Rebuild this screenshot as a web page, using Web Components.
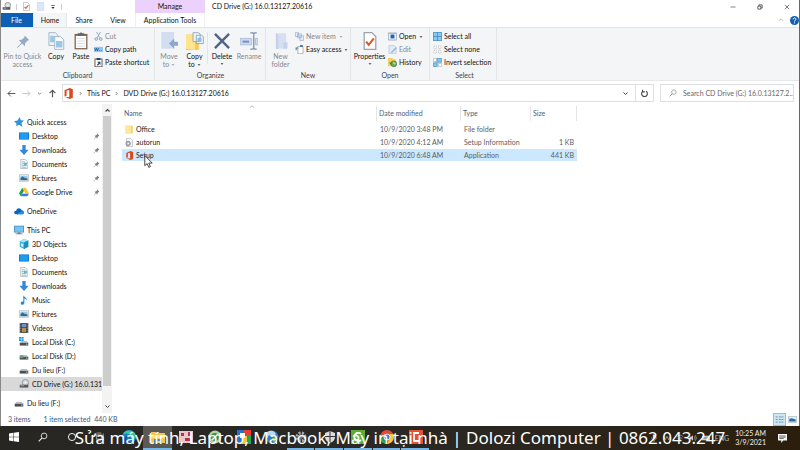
<!DOCTYPE html>
<html lang="en">
<head>
<meta charset="utf-8">
<title>CD Drive (G:) 16.0.13127.20616</title>
<style>
body{margin:0;font:7px/9px Lato,"Open Sans",sans-serif;color:#111;background:#fff}
</style>
</head>
<body>
<explorer-app></explorer-app>
<script>
const office='<path fill="#d9481c" d="M2 3l6.500-3 4 1.500v11L8.500 14 2 11.200l6 .6V2.600L4.500 3.600v6.200L2 10.800z"/>';
const mono='<path fill="#4a4f55" d="M1 8h12v4H1z"/><path fill="#a5aab0" d="M3 6h8l2 2H1z"/><path fill="#e8f5ea" d="M10 9.500h2v1h-2z"/>';
const page='<path fill="#fff" stroke="#9aa4ad" d="M2.500.5h6l3 3v10h-9z"/>';
const desk='<path fill="#0a74d1" d="M0 2h14v10H0z"/><path fill="#1c9bf0" d="M1 3h12v8H1z"/>';
const pin='<path d="M8.500 1l4.500 4.500-1.500.3-2.500 2.500-.3 3L6 8.700 1.500 13 1 12.500 5.300 8 2.700 5.300l3-.3L8.200 2.500z"/>';
const ICONS={
 office, drive:mono,
 cd:'<circle cx="9" cy="5" r="4.500" fill="#d4d7da" stroke="#888"/><circle cx="9" cy="5" r="1.300" fill="#fff"/><path fill="#555b60" d="M1 8h12v4H1z"/><path fill="#bbb" d="M2 9h5v1H2z"/>',
 check:page+'<path fill="none" stroke="#dd5b2b" stroke-width="1.700" d="M4 7.500l2 2.500 4-5"/>',
 blank:'<path fill="#dce6f6" stroke="#c6d5ec" d="M2 .5h10v13H2z"/>',
 caret:'<path fill="#333" d="M2 4h10L7 10z"/>', qat:'<path fill="#333" d="M3 7h8l-4 4.500zM3 3h8v1.500H3z"/>',
 min:'<path stroke="#444" stroke-width="1.500" d="M1 7h12"/>',
 restore:'<path fill="none" stroke="#333" stroke-width="1.700" d="M2 5h7v7H2zM4.500 5V2h7.500v7.500H9"/>',
 close:'<path stroke="#333" stroke-width="1.500" d="M2 2l10 10M12 2L2 12"/>',
 up:'<path fill="none" stroke="#999" stroke-width="1.600" d="M2 9l5-5 5 5"/>',
 updark:'<path fill="none" stroke="#444" stroke-width="2.200" d="M3 9l4-4 4 4"/>',
 down:'<path fill="none" stroke="#444" stroke-width="2" d="M3 5l4 4 4-4"/>',
 help:'<circle cx="7" cy="7" r="7" fill="#1460ac"/><path fill="none" stroke="#fff" stroke-width="1.500" d="M4.800 5.200C5 2 9.500 2.500 9.200 5.200 9 6.500 7 6.800 7 8.800M7 10v1.600"/>',
 pinbig:'<g fill="#94a9c8" transform="translate(1.500 2) scale(.8)">'+pin+'</g>', pin:'<g fill="#7c848c">'+pin+'</g>',
 copy:'<path fill="#eef3f8" stroke="#93a7ba" stroke-width=".6" d="M1.500.500h5l2 2v8h-7z"/><path fill="#f7fbff" stroke="#93a7ba" stroke-width=".6" d="M6 3.500h4.500l2.500 2.500v7.500H6z"/><path fill="#9cc7e2" d="M2.500 3H6v5H2.500zM7 7h5v5H7z"/>',
 paste:'<path fill="#80664b" d="M2 1.500h10v12H2z"/><path fill="#fff" d="M3 3h8v9.500H3z"/><path fill="#5c6872" d="M4.500 1h1.700L7 0l.8 1h1.700v2h-5z"/><path stroke="#c1ccd4" stroke-width=".5" d="M4 5h6M4 7h6M4 9h6M4 11h6"/>',
 cut:'<path fill="none" stroke="#8ea5bf" stroke-width="1.400" d="M4 0l5 9M10 0L5 9"/><circle cx="3.500" cy="11" r="2" fill="none" stroke="#8298b8" stroke-width="1.400"/><circle cx="10.500" cy="11" r="2" fill="none" stroke="#8298b8" stroke-width="1.400"/>',
 path:'<path fill="#8fc6ee" d="M0 3h14v8H0z"/><path fill="none" stroke="#23598b" stroke-width="1.300" d="M1 5l1.500 4L4 5l1.500 4L7 5M8.500 8.500h1M11 8.500h1"/>',
 shortcut:'<path fill="#fff" stroke="#77644f" stroke-width="1.600" d="M1.500 1.500h11v12h-11z"/><path fill="#25466c" d="M4 0h6v3H4zM5 6h5v5L8.500 9.500 6 12 4.500 10.500 7 8z"/>',
 move:'<path fill="#d3ddf0" d="M1 0h10v13H1z"/><path fill="#8fa5cb" d="M7 9l4-4v2.500h3v3.200h-3V13z"/>',
 copyto:'<path fill="#f5cb57" d="M0 2h10v12H0z"/><path fill="#ffe48c" d="M0 2l7 1v11l-7-1z"/><path fill="#eef5fa" stroke="#7f99ad" stroke-width=".6" d="M5.500.5h4l1.500 1v6H5.500zM8 2.500h4l1.500 1V9H8z"/><path fill="#91bddb" d="M9 4.500h3v3H9z"/>',
 del:'<path stroke="#50658a" stroke-width="1.900" d="M1.500 1.500l11 11M12.500 1.500l-11 11"/>',
 rename:'<path fill="#ccd9ee" stroke="#a2b7d6" stroke-width=".6" d="M0 5h9v5H0zM12 5h2v5h-2z"/><path fill="#7893bd" d="M2 6.700h5v1.600H2z"/><path fill="none" stroke="#7c8fae" d="M8 .7h2l.7.6.7-.6H13M8 13.300h2l.7-.6.7.6H13M10.700 1v12"/>',
 newfolder:'<path fill="#d7e0f2" d="M3 1h8v12H3z"/><path fill="#c5d2eb" d="M3 1l2 1.500v11L3 13zM9 8h3v5H9z"/>',
 newitem:'<path fill="#e9eff8" stroke="#8ca3c8" d="M.5 1h5v6h-5zM4 3h6v6H4zM7.500 6h6v7h-6z"/>',
 easy:'<path fill="#fff" stroke="#87929b" d="M4.500 2.500h8v11h-8z"/><path fill="#43739e" d="M1 4h4v1.500H2.500V8H1zM8 0h4v3H8z"/>',
 open:'<path fill="#e5f2fa" stroke="#84919c" d="M.5 1.500h13v11H.5z"/><path fill="#2166b5" d="M4 4h6v6H4z"/><path fill="#aab" d="M1 2h12v1H1z"/>',
 edit:'<path fill="#e4ebf8" stroke="#adbfdd" d="M1.500.5h8l3 3v10h-11z"/><path stroke="#a5b8db" stroke-width="2.500" d="M5 12l8-8"/>',
 history:'<path fill="#f4cf5d" d="M0 0h7l1 2h4v11H0z"/><circle cx="9" cy="9" r="4.500" fill="#72a94a" stroke="#347434"/><path fill="none" stroke="#fff" d="M9 6v3h3"/><path fill="#367b36" d="M2 7l4 0-2 4z"/>',
 all:'<path fill="#8cc7ed" d="M0 0h14v14H0z"/><path fill="none" stroke="#3d8cc0" stroke-width="1.200" d="M.5.500h13v13H.5zM7 0v14M0 7h14"/>',
 none:'<path fill="#fff" stroke="#a6a9ad" stroke-width=".9" stroke-dasharray="2 1" d="M1.500 1.500h4v4h-4zM8.500 1.500h4v4h-4zM1.500 8.500h4v4h-4zM8.500 8.500h4v4h-4z"/>',
 invert:'<path fill="#fff" stroke="#9aabb8" d="M.5.500h5v5h-5zM8.500 8.500h5v5h-5z"/><path fill="#86c4eb" stroke="#3c8bbf" d="M6.500.5h7v6h-7zM.5 7.500h6v6h-6z"/>',
 back:'<path fill="none" stroke="#555" stroke-width="1.500" d="M13 7H1.500M6 2.500L1.500 7 6 11.500"/>',
 fwd:'<path fill="none" stroke="#c6c6c6" stroke-width="1.500" d="M1 7h11.500M8 2.500L12.500 7 8 11.500"/>',
 upnav:'<path fill="none" stroke="#555" stroke-width="1.800" d="M7 13V2M2.500 6.500L7 2l4.500 4.500"/>',
 right:'<path fill="none" stroke="#444" stroke-width="2" d="M5 3l4 4-4 4"/>',
 refresh:'<path fill="none" stroke="#444" stroke-width="1.700" d="M9.500 3.500a4.500 4.500 0 1 1-5 0M4 1v3.500h3.500"/>',
 search:'<circle cx="8.500" cy="5.500" r="4" fill="none" stroke="currentColor" stroke-width="1.200"/><path stroke="currentColor" stroke-width="1.500" d="M5.500 8.500L1 13"/>',
 star:'<path fill="#2b93df" d="M8 0l1.500 4.500L14 5l-3.500 3.500 1 5L7 11l-4 2 .5-4L0 6l5-1z"/>',
 desktop:desk,
 downloads:'<path fill="#3188d8" d="M4.700 0h4.600v6.500H13.500L7 14 .5 6.500h4.200z"/>',
 documents:page+'<path stroke="#4fa5bd" d="M4 4h4M4 6.500h6M4 9h6M4 11.500h6"/><path fill="#68b8c8" d="M7 5h4v4H7z"/>',
 pictures:'<path fill="#f7fbfd" stroke="#aaa" d="M.5 2.500h13v9H.5z"/><path fill="#91cdea" d="M2 4h10v3H2z"/><path fill="#31698b" d="M2 7l3-2 3 2 4 .5V10H2z"/>',
 gdrive:'<path fill="#269a55" d="M4.500 1L0 9l2.500 4L7 5z"/><path fill="#f6c52c" d="M5 1h4.500L14 9H9z"/><path fill="#3b78d8" d="M4.500 9.500H14L11.500 13h-9z"/>',
 onedrive:'<path fill="#0b64bd" d="M3.500 11.500C-1 11.500-.5 6.500 3 6.500 4 2 9.500 2 10.500 6c4-.5 4.500 5.500 1 5.500z"/><path fill="#2092e8" d="M4 11.500l6.500-4c4-1 4.500 4 1 4z"/>',
 pc:'<path fill="#458bb8" d="M0 1h14v9.500H0z"/><path fill="#73c5f3" d="M1 2h12v7.500H1z"/><path fill="#6b7882" d="M5 10.500h4V12h3v1H2v-1h3z"/>',
 cube:'<path fill="#36b5dd" d="M1 3l6-3 6 2v9l-6 3-6-3z"/><path fill="#a8e6f5" d="M1 3l6 2 6-3-6-2z"/><path fill="#198fbf" d="M7 5l6-3v9l-6 3z"/><path fill="#e0f8fc" d="M3 6l3 1v4L3 10z"/>',
 music:'<path fill="#2089dc" d="M6 0c.5 3 5.500 3 5 8-1-2-2-3-3.500-3v6C7.500 15 2 14 2.500 11 3 9 5 9 6 9.500z"/>',
 videos:'<path fill="#3d3e43" d="M1 0h12v14H1z"/><path fill="#6a96c7" d="M4 1h6v5H4z"/><path fill="#b98d4c" d="M4 7h6v6H4z"/><path stroke="#ddd" stroke-dasharray="1 1.500" d="M2.500 0v14M11.500 0v14"/>',
 windisk:mono+'<path fill="#189ce1" d="M0 0h3v2.500H0zM3.500 0h3v2.500h-3zM0 3h3v2.500H0zM3.500 3h3v2.500h-3z"/>',
 netdisk:mono+'<path fill="#6b9b7a" d="M1 6h5v4H1z"/>',
 folder:'<path fill="#efcb63" d="M1 1h11v12H1z"/><path fill="#ffe799" d="M1 1l9 1v12l-9-1z"/>',
 inf:page+'<circle cx="5" cy="8.500" r="3.500" fill="#aeb4ba" stroke="#73797e"/><circle cx="5" cy="8.500" r="1.200" fill="#fff"/>',
 details:'<path stroke="#557" d="M1 3h3M1 7h3M1 11h3M6 3h3M6 7h3M6 11h3M10 3h3M10 7h3M10 11h3"/>',
 thumb:'<path fill="#e8f3f9" stroke="#9ab" d="M.5 2.500h13v9H.5z"/><path fill="#296e9d" d="M2 6l4-1 6 2v3H2z"/>',
 start:'<path fill="#fff" d="M0 2l6-1v5.600H0zM6.700.9L14 0v6.600H6.700zM0 7.300h6V13l-6-1zM6.700 7.300H14V14l-7.300-1z"/>',
 ring:'<circle cx="7" cy="7" r="5" fill="none" stroke="#fff" stroke-width="1.300"/>',
 task:'<path fill="none" stroke="#ccc" d="M2 4h7v6H2zM11.500 2v10M2 1.500h7M2 12.500h7"/>',
 edge:'<circle cx="7" cy="7" r="7" fill="#1683c9"/><path fill="#38c99c" d="M1 4C3-1 13-1 14 6c0 4-5 4-5 2 1-5-5-5-8-4z"/><path fill="#0b4f9c" d="M5 6c-2 5 3 8 7 5-3 5-12 3-11-3z"/>',
 explorer:'<path fill="#f4c44b" d="M0 2h5l1 1h8v10H0z"/><path fill="#ffe28a" d="M0 5h14v3H0z"/><path fill="#4389bd" d="M3 9h8v4H9v-2H5v2H3z"/>',
 app1:'<path fill="#e7c8cc" d="M0 1h14v12H0z"/><path fill="#b92f45" d="M2 3h3v3H2zM9 2h3v4H9zM6 8h5v3H6z"/>',
 app2:'<circle cx="7" cy="7" r="6.500" fill="#aed4a0"/><circle cx="7" cy="7" r="4" fill="#438b42"/><path stroke="#fff" stroke-width="1.500" d="M4 10l6-6"/>',
 app3:'<path fill="#2670d6" d="M0 0h7v14H0z"/><path fill="#e53f32" d="M7 0h7v6H7z"/><path fill="#22a65b" d="M8 5h6v9H8z"/><path fill="#f5c632" d="M5 6h5v8H5z"/><path fill="#fff" d="M3 3h5v5H3z"/>',
 globe:'<circle cx="7" cy="7" r="6.500" fill="#337bc4"/><path fill="#bbd9f3" d="M2 2c5-3 8 0 9 2L7 7 4 5 2 8z"/><path fill="#8fc95d" d="M7 8l5-1-3 6z"/>',
 gear:'<circle cx="7" cy="7" r="4" fill="none" stroke="#aaa" stroke-width="3" stroke-dasharray="2 1.200"/><circle cx="7" cy="7" r="2" fill="#777"/>',
 shield:'<path fill="#ddd" d="M7 1l5 2v4c0 3-2 5-5 6-3-1-5-3-5-6V3z"/><path stroke="#333" d="M7 1v12M1 6.500h12"/>',
 cam:'<path fill="#5fae2f" d="M0 0h14v14H0z"/><path fill="none" stroke="#fff" stroke-width="2" d="M10 4a4 4 0 1 0 0 6"/>',
 chrome:'<circle cx="7" cy="7" r="7" fill="#e34a38"/><path fill="#2b9f52" d="M1 3.500l4.500 7L7 14C0 14-1 7 1 3.500z"/><path fill="#f7c934" d="M7 14l3-6V4h3.500C15 9 12 14 7 14z"/><circle cx="7" cy="7" r="3.300" fill="#fff"/><circle cx="7" cy="7" r="2.500" fill="#3979d4"/>',
 rec:'<path fill="#e8512f" d="M0 0h14v14H0z"/><path fill="none" stroke="#fff" stroke-width="1.800" d="M10 3H5v8h5"/>',
 mic:'<path fill="#ddd" d="M5 1h4v7H5z"/><path fill="none" stroke="#ddd" d="M3 6c0 6 8 6 8 0M7 10v4"/>',
 cloud:'<path fill="none" stroke="#bbb" stroke-width="1.300" d="M1 4l3 6 3-6 3 6 3-6"/>',
 sound:'<path fill="#ccc" d="M1 5h3l3-3v10L4 9H1z"/><path fill="none" stroke="#ccc" d="M9 4q3 3 0 6M11 2q4 5 0 10"/>',
 wifi:'<path fill="none" stroke="#ccc" d="M1 5q6-6 12 0M3 8q4-4 8 0M5 10q2-2 4 0"/>',
 key:'<path fill="#ccc" d="M0 3h14v8H0z"/><path stroke="#333" stroke-dasharray="1 1" d="M2 6h10M2 8h10"/>',
 note:'<path fill="#f5f5f5" d="M0 0h14v10H8l-3 4v-4H0z"/><path stroke="#333" d="M2 3h10M2 5h10M2 7h7"/>',
 cursor:'<path fill="#fff" stroke="#222" stroke-width=".9" d="M3 .5v11l2.500-2.200 1.800 4 1.800-.8-1.800-3.800H11z"/>'
};
function define(name,html,ready){
  const t=document.createElement('template'); t.innerHTML=html;
  customElements.define(name,class extends HTMLElement{
    connectedCallback(){
      if(this.shadowRoot) return;
      this.attachShadow({mode:'open'}).append(t.content.cloneNode(true));
      if(ready) ready(this,this.shadowRoot);
    }
  });
}
const btn='button{all:unset;box-sizing:border-box;font:inherit;color:inherit;cursor:default}button:focus-visible{outline:1px solid #0a64c0}';

define('ui-icon','<style>:host{display:block;flex:none;width:var(--icon,10px);height:var(--icon,10px)}svg{display:block;width:100%;height:100%}</style><svg viewBox="0 0 14 14" aria-hidden="true"></svg>',
  (h,r)=>{r.querySelector('svg').innerHTML=ICONS[h.getAttribute('name')]||''});

define('icon-button',`<style>${btn}:host{display:block}button{display:grid;place-items:center;width:100%;height:100%}</style><button><slot></slot></button>`,
  (h,r)=>r.querySelector('button').setAttribute('aria-label',h.getAttribute('label')));

define('title-bar',`<style>${btn}
:host{display:grid;grid-template-columns:135px 70px 1fr auto;grid-template-rows:13px 14px;background:#fff}
.qat{display:flex;align-items:center;gap:5px;padding-left:2px;--icon:9px}
.sep{width:1px;height:6px;background:#ccc}
.manage{background:#ebd1fb;text-align:center;line-height:12px}
h1{margin:0;font:inherit;padding-left:7px;line-height:13px}
.win{display:flex;--icon:6px}.win icon-button{width:27px}
.tabs{display:flex;grid-row:2;line-height:14px;text-align:center}
.tabs button{width:34px}.tabs .file{background:#0b5fb4;color:#fff;width:33px}.tabs .home{background:#f4f5f7;box-shadow:inset 1px 0 #e6e7e9,inset -1px 0 #e6e7e9}
.app{grid-row:2;text-align:center;line-height:14px;border:solid #eee;border-width:0 1px}
.help{grid-row:2;grid-column:4;display:flex;align-items:center;justify-content:flex-end;gap:6px;padding-right:1px;--icon:6px}
.help .q{--icon:9px}
</style>
<div class="qat"><ui-icon name="cd"></ui-icon><i class="sep"></i><icon-button label="Properties"><ui-icon name="check"></ui-icon></icon-button><icon-button label="New folder"><ui-icon name="blank"></ui-icon></icon-button><icon-button label="Customize" style="--icon:6px"><ui-icon name="qat"></ui-icon></icon-button><i class="sep"></i></div>
<div class="manage">Manage</div><h1>CD Drive (G:) 16.0.13127.20616</h1>
<div class="win"><icon-button label="Minimize"><ui-icon name="min"></ui-icon></icon-button><icon-button label="Restore"><ui-icon name="restore"></ui-icon></icon-button><icon-button label="Close"><ui-icon name="close"></ui-icon></icon-button></div>
<div class="tabs"><button class="file">File</button><button class="home">Home</button><button>Share</button><button>View</button></div>
<button class="app">Application Tools</button>
<div class="help"><icon-button label="Collapse ribbon"><ui-icon name="up"></ui-icon></icon-button><icon-button class="q" label="Help"><ui-icon name="help"></ui-icon></icon-button></div>`);

define('big-command',`<style>${btn}:host{display:block;--icon:18px}:host([off]){color:#85888c}
button{display:flex;flex-direction:column;align-items:center;width:100%;text-align:center;line-height:8px;white-space:nowrap;padding-top:2px}
ui-icon{margin-bottom:2px}.arrow{--icon:4px;margin-top:2px}:host(:not([menu])) .arrow{display:none}</style>
<button><ui-icon class="pic"></ui-icon><span><slot></slot></span><ui-icon class="arrow" name="caret"></ui-icon></button>`,
 (h,r)=>{const i=document.createElement('ui-icon');i.setAttribute('name',h.getAttribute('icon'));r.querySelector('.pic').replaceWith(i);r.querySelector('button').disabled=h.hasAttribute('off')});

define('small-command',`<style>${btn}:host{display:block}:host([off]){color:#85888c}
button{display:flex;align-items:center;gap:2px;height:13px;white-space:nowrap}.arrow{--icon:4px;margin-left:1px}:host([off]) .arrow{opacity:.5}:host(:not([menu])) .arrow{display:none}</style>
<button><ui-icon class="pic"></ui-icon><slot></slot><ui-icon class="arrow" name="caret"></ui-icon></button>`,
 (h,r)=>{const i=document.createElement('ui-icon');i.setAttribute('name',h.getAttribute('icon'));r.querySelector('.pic').replaceWith(i);r.querySelector('button').disabled=h.hasAttribute('off')});

define('ribbon-group',`<style>:host{display:flex;flex-direction:column;box-sizing:border-box;border-right:1px solid #e2e4e6;padding:2px 0 0}
.items{display:grid;grid-template-columns:var(--cols);flex:1}footer{text-align:center;line-height:9px;color:#444}</style>
<div class="items"><slot></slot></div><footer></footer>`,(h,r)=>r.querySelector('footer').textContent=h.getAttribute('label'));

define('ribbon-bar',`<style>:host{display:grid;grid-template-columns:155px 111px 85px 79px 67px;height:54px;box-sizing:border-box;background:#f4f5f7;border-top:1px solid #e1e3e6;border-bottom:1px solid #e6e7e9}
.list{--icon:9px}.line{border-left:1px solid #e2e4e6;margin:2px 0 7px}
.arr{display:inline-block;--icon:4px;margin-left:2px}
.clip{--cols:43px 24px 26px 1fr;padding-left:1px}.org{--cols:26px 25px 2px 26px 28px;padding-left:1px}.new{--cols:29px 1fr}.open{--cols:37px 1fr}.select{--cols:1fr;padding-left:3px}</style>
<ribbon-group class="clip" label="Clipboard"><big-command icon="pinbig" off>Pin to Quick<br>access</big-command><big-command icon="copy">Copy</big-command><big-command icon="paste">Paste</big-command>
<div class="list"><small-command icon="cut" off>Cut</small-command><small-command icon="path">Copy path</small-command><small-command icon="shortcut">Paste shortcut</small-command></div></ribbon-group>
<ribbon-group class="org" label="Organize"><big-command icon="move" off>Move<br>to<ui-icon class="arr" name="caret" style="opacity:.5"></ui-icon></big-command><big-command icon="copyto">Copy<br>to<ui-icon class="arr" name="caret"></ui-icon></big-command><i class="line"></i><big-command icon="del" menu>Delete</big-command><big-command icon="rename" off>Rename</big-command></ribbon-group>
<ribbon-group class="new" label="New"><big-command icon="newfolder" off>New<br>folder</big-command><div class="list"><small-command icon="newitem" off menu>New item</small-command><small-command icon="easy" menu>Easy access</small-command></div></ribbon-group>
<ribbon-group class="open" label="Open"><big-command icon="check" menu>Properties</big-command><div class="list"><small-command icon="open" menu>Open</small-command><small-command icon="edit" off>Edit</small-command><small-command icon="history">History</small-command></div></ribbon-group>
<ribbon-group class="select" label="Select"><div class="list"><small-command icon="all">Select all</small-command><small-command icon="none">Select none</small-command><small-command icon="invert">Invert selection</small-command></div></ribbon-group>`);

define('address-bar',`<style>${btn}:host{display:flex;align-items:center;gap:6px;height:23px;padding:1px 6px 0 7px;box-sizing:border-box;--icon:9px}
.nav{display:flex;gap:6px;align-items:center}.s{--icon:5px}
.box{display:flex;align-items:center;box-sizing:border-box;height:18px;border:1px solid #dedfe0;background:#fff}
.crumbs{flex:1;gap:4px;margin-left:-1px}.crumbs a{color:inherit;text-decoration:none}.crumbs .d{margin-left:auto;--icon:7px;width:12px}.crumbs .r{width:17px;height:100%;border-left:1px solid #dedfe0}
.find{width:134px;gap:6px;padding-left:8px;color:#888;--icon:8px}input{all:unset;flex:1;min-width:0;font:inherit;color:#666}input::placeholder{color:#666;opacity:1}input::-webkit-search-cancel-button{display:none}</style>
<div class="nav"><icon-button label="Back"><ui-icon name="back"></ui-icon></icon-button><icon-button label="Forward"><ui-icon name="fwd"></ui-icon></icon-button><icon-button class="s" label="Recent"><ui-icon name="down"></ui-icon></icon-button><icon-button label="Up"><ui-icon name="upnav"></ui-icon></icon-button></div>
<div class="box crumbs"><ui-icon name="office" style="--icon:11px"></ui-icon><ui-icon class="s" name="right"></ui-icon><a href="#pc">This PC</a><ui-icon class="s" name="right"></ui-icon><a href="#drive">DVD Drive (G:) 16.0.13127.20616</a><icon-button class="d" label="Previous locations"><ui-icon name="down"></ui-icon></icon-button><icon-button class="r" label="Refresh"><ui-icon name="refresh"></ui-icon></icon-button></div>
<label class="box find"><ui-icon name="search"></ui-icon><input type="search" aria-label="Search" placeholder="Search CD Drive (G:) 16.0.13127.2..."></label>`);

define('nav-item',`<style>:host{display:block}a{display:flex;align-items:center;gap:3px;height:14px;padding-left:19px;color:inherit;text-decoration:none;white-space:nowrap}
:host([root]) a{padding-left:14px}:host([active]) a{background:#d9d9d9}.pin{--icon:7px;margin:0 2px 0 auto}:host(:not([pinned])) .pin{display:none}</style>
<a href="#"><ui-icon class="pic"></ui-icon><slot></slot><ui-icon class="pin" name="pin"></ui-icon></a>`,
 (h,r)=>{const i=document.createElement('ui-icon');i.setAttribute('name',h.getAttribute('icon'));r.querySelector('.pic').replaceWith(i)});

define('side-nav',`<style>:host{display:grid;grid-template-columns:102px 10px;min-height:0}nav{display:flex;flex-direction:column;gap:5px;padding-top:11px;--icon:10px}
.bar{display:flex;flex-direction:column;align-items:center;background:#f3f3f3;padding:3px 0;gap:2px;--icon:7px}.thumb{flex:1;width:8px;background:#cdcdcd;margin-bottom:15px}</style>
<nav aria-label="Folders"><div><nav-item root icon="star">Quick access</nav-item><nav-item icon="desktop" pinned>Desktop</nav-item><nav-item icon="downloads" pinned>Downloads</nav-item><nav-item icon="documents" pinned>Documents</nav-item><nav-item icon="pictures" pinned>Pictures</nav-item><nav-item icon="gdrive" pinned>Google Drive</nav-item></div>
<nav-item root icon="onedrive">OneDrive</nav-item>
<div><nav-item root icon="pc">This PC</nav-item><nav-item icon="cube">3D Objects</nav-item><nav-item icon="desktop">Desktop</nav-item><nav-item icon="documents">Documents</nav-item><nav-item icon="downloads">Downloads</nav-item><nav-item icon="music">Music</nav-item><nav-item icon="pictures">Pictures</nav-item><nav-item icon="videos">Videos</nav-item><nav-item icon="windisk">Local Disk (C:)</nav-item><nav-item icon="netdisk">Local Disk (D:)</nav-item><nav-item icon="drive">Du lieu (F:)</nav-item><nav-item icon="cd" active>CD Drive (G:) 16.0.1312</nav-item></div>
<nav-item root icon="drive">Du lieu (F:)</nav-item></nav>
<div class="bar"><ui-icon name="updark"></ui-icon><div class="thumb"></div><ui-icon name="down"></ui-icon></div>`);

define('file-list',`<style>:host{display:block;padding:2px 0 0 10px;--icon:9px}
table{border-collapse:separate;border-spacing:0;table-layout:fixed;width:455px;color:#5c5c5c}
.n{width:255px}.d{width:84px}.t{width:70px}
th{height:15px;padding:0 3px 0 2px;font-weight:400;text-align:left;color:#4c607a;border-right:1px solid #e5e5e5;position:relative}
th .up{position:absolute;left:50%;top:-2px;--icon:6px}
td{height:12px;padding:0 3px;line-height:12px;white-space:nowrap;border-bottom:1px solid #fff}
tbody tr:first-child td{border-top:2px solid #fff}
td:last-child{text-align:right;}.name{display:flex;align-items:center;gap:2px;color:#222;position:relative}
tr.sel td{background:#cce8ff}.cur{position:absolute;left:17px;top:6px;--icon:13px}</style>
<table><colgroup><col class="n"><col class="d"><col class="t"><col></colgroup><thead><tr><th>Name<ui-icon class="up" name="up"></ui-icon></th><th>Date modified</th><th>Type</th><th>Size</th></tr></thead>
<tbody><tr><td><div class="name"><ui-icon name="folder"></ui-icon>Office</div></td><td>10/9/2020 3:48 PM</td><td>File folder</td><td></td></tr>
<tr><td><div class="name"><ui-icon name="inf"></ui-icon>autorun</div></td><td>10/9/2020 4:12 AM</td><td>Setup Information</td><td>1 KB</td></tr>
<tr class="sel"><td><div class="name"><ui-icon name="office"></ui-icon>Setup<ui-icon class="cur" name="cursor"></ui-icon></div></td><td>10/9/2020 6:48 AM</td><td>Application</td><td>441 KB</td></tr></tbody></table>`);

define('status-bar',`<style>:host{display:flex;align-items:center;height:13px;padding:0 3px 0 8px;color:#40577a}.v{margin-left:auto;display:flex;gap:2px;--icon:9px}.on{background:#cce8f5;box-shadow:inset 0 0 0 1px #83c5de;width:13px;height:13px}.sel{margin:0 4px 0 13px}</style>
<span>3 items</span><span class="sel">1 item selected</span><span>440 KB</span><div class="v"><icon-button class="on" label="Details"><ui-icon name="details"></ui-icon></icon-button><icon-button label="Thumbnails"><ui-icon name="thumb"></ui-icon></icon-button></div>`);

define('task-bar',`<style>:host{display:flex;justify-content:space-between;position:relative;height:24px;background:linear-gradient(90deg,#282623,#2b2926 45%,#2a241b 75%,#2b1e0c);color:#eee;--icon:14px;overflow:hidden}
.apps{display:flex;width:430px}.apps icon-button{flex:1;box-sizing:border-box;border-bottom:2px solid transparent}.apps .run{border-image:linear-gradient(90deg,transparent 8%,#75b6e9 8%,#75b6e9 90%,transparent 90%) 2}.apps .now{background:#5c5853;border-bottom-color:#75b6e9}.apps .sm{--icon:10px}
.tray{display:flex;align-items:center;gap:5px;padding-right:13px;--icon:8px;color:#bbb}time{line-height:9px;text-align:center;margin:0 7px 0 1px;color:#eee}.tray icon-button{--icon:9px}
p{position:absolute;inset:0;margin:0;text-align:center;color:#fff;font:17px/24px "Noto Sans","Open Sans",sans-serif;white-space:nowrap;pointer-events:none}</style>
<div class="apps"></div>
<div class="tray"><ui-icon name="mic"></ui-icon><ui-icon name="cloud"></ui-icon><ui-icon name="wifi"></ui-icon><ui-icon name="sound"></ui-icon><ui-icon name="key"></ui-icon><span>ENG</span><time>10:25 AM<br>3/9/2021</time><icon-button label="Notifications"><ui-icon name="note"></ui-icon></icon-button></div>
<p>Sửa máy tính, Laptop, Macbook, Máy in tại nhà | Dolozi Computer | 0862.043.247</p>`,
 (h,r)=>{r.querySelector('.apps').innerHTML=[['start','Start','sm'],['search','Search','sm'],['ring','Cortana','sm'],['task','Task view','sm'],['edge','Edge',''],['explorer','File Explorer','now'],['app1','Unikey',''],['app2','Coc Coc',''],['app3','Google',''],['globe','Browser',''],['gear','Tools','run'],['shield','Security','run'],['cam','Camtasia','run'],['chrome','Chrome','run'],['rec','Recorder','run']].map(([i,l,c])=>`<icon-button label="${l}" class="${c}"><ui-icon name="${i}"></ui-icon></icon-button>`).join('')});

define('explorer-app',`<style>:host{display:flex;flex-direction:column;min-height:100vh}
.win{flex:1;display:flex;flex-direction:column;position:relative}
.win::after{content:"";position:absolute;inset:0;box-shadow:inset 1px 0 #888,inset -1px 0 #666;pointer-events:none}
main{flex:1;display:grid;grid-template-columns:112px 1fr}</style>
<div class="win"><title-bar></title-bar><ribbon-bar></ribbon-bar><address-bar></address-bar><main><side-nav></side-nav><file-list></file-list></main><status-bar></status-bar></div><task-bar></task-bar>`);
</script>
</body>
</html>
